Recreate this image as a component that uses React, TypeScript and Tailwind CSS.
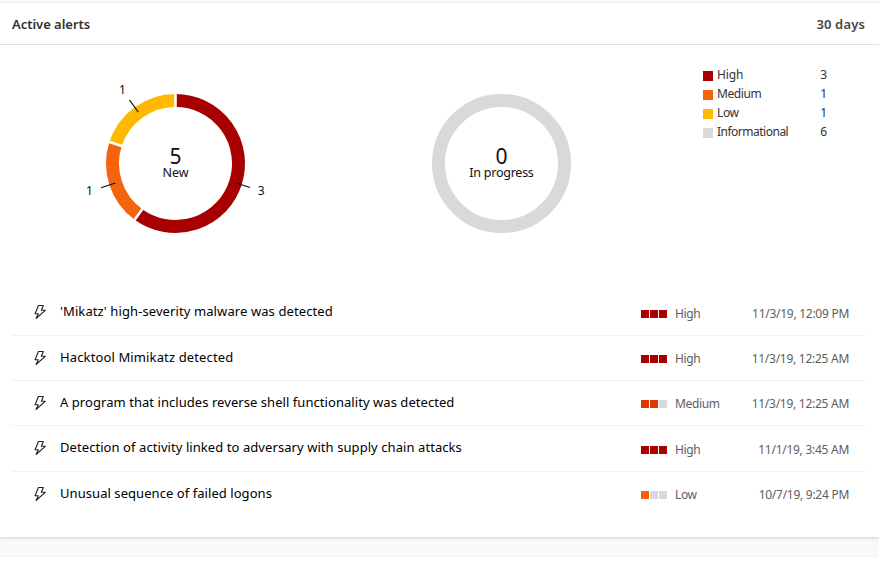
type Level = "High" | "Medium" | "Low";

const legend = [
  { name: "High", count: 3, color: "bg-[#a80000]", tracking: "tracking-[-0.1px]" },
  { name: "Medium", count: 1, color: "bg-[#f4630d]", tracking: "tracking-[-0.4px]" },
  { name: "Low", count: 1, color: "bg-[#ffb900]", tracking: "tracking-[-0.4px]" },
  { name: "Informational", count: 6, color: "bg-[#d9d9d9]", tracking: "tracking-[-0.5px]" },
];

const bars: Record<Level, string[]> = {
  High: ["bg-[#a80000]", "bg-[#a80000]", "bg-[#a80000]"],
  Medium: ["bg-[#d83b01]", "bg-[#d83b01]", "bg-[#d9d9d9]"],
  Low: ["bg-[#f4630d]", "bg-[#d9d9d9]", "bg-[#d9d9d9]"],
};

const alerts: { title: string; level: Level; time: string; row: string; meta: string; tracking: string }[] = [
  { title: "'Mikatz' high-severity malware was detected", level: "High", time: "11/3/19, 12:09 PM", row: "h-[46px] border-b", meta: "pt-[15px]", tracking: "tracking-[0.1px]" },
  { title: "Hacktool Mimikatz detected", level: "High", time: "11/3/19, 12:25 AM", row: "h-[45px] border-b", meta: "pt-[14px]", tracking: "tracking-[0.13px]" },
  { title: "A program that includes reverse shell functionality was detected", level: "Medium", time: "11/3/19, 12:25 AM", row: "h-[45px] border-b", meta: "pt-[14px]", tracking: "tracking-[0.055px]" },
  { title: "Detection of activity linked to adversary with supply chain attacks", level: "High", time: "11/1/19, 3:45 AM", row: "h-[46px] border-b", meta: "pt-[15px]", tracking: "tracking-[0.07px]" },
  { title: "Unusual sequence of failed logons", level: "Low", time: "10/7/19, 9:24 PM", row: "h-[46px]", meta: "pt-[14px]", tracking: "tracking-[0.06px]" },
];

const C = 70;
function point(r: number, deg: number) {
  const a = (deg * Math.PI) / 180;
  return `${(C + r * Math.sin(a)).toFixed(2)} ${(C - r * Math.cos(a)).toFixed(2)}`;
}

function Arc({ from, to, color }: { from: number; to: number; color: string }) {
  const large = to - from > 180 ? 1 : 0;
  return <path d={`M${point(63, from)} A63 63 0 ${large} 1 ${point(63, to)}`} fill="none" stroke={color} strokeWidth="13" />;
}

function NewDonut() {
  return (
    <svg className="block h-[170px] w-[200px]" viewBox="-25.5 -18.5 200 170">
      <Arc from={0} to={216} color="#a80000" />
      <Arc from={216} to={288} color="#f4630d" />
      <Arc from={288} to={360} color="#ffb900" />
      {[0, 216, 288].map((a) => (
        <path key={a} d={`M${point(55, a)} L${point(71, a)}`} stroke="#fff" strokeWidth="2.6" />
      ))}
      <g stroke="#111" strokeWidth="1.2">
        <path d="M130.5 89.5L144.5 94" />
        <path d="M9.8 89.5L-4.5 94.2" />
        <path d="M32.8 18.6L24 6.5" />
      </g>
      <g fill="#111" fontSize="12" textAnchor="middle">
        <text x="155.6" y="101.5">3</text>
        <text x="-16" y="101.5">1</text>
        <text x="17" y="0.5">1</text>
        <text x="70" y="70.3" fontSize="21">5</text>
        <text x="70" y="83.3" fontSize="12.5">New</text>
      </g>
    </svg>
  );
}

function ProgressDonut() {
  return (
    <svg className="block h-[170px] w-[200px]" viewBox="-25.5 -18.5 200 170">
      <circle cx={C} cy={C} r="63" fill="none" stroke="#d9d9d9" strokeWidth="13" />
      <g fill="#111" textAnchor="middle">
        <text x="70" y="70.3" fontSize="21">0</text>
        <text x="70" y="83.3" fontSize="12.5" letterSpacing="-0.25">In progress</text>
      </g>
    </svg>
  );
}

function Bolt() {
  return (
    <svg className="mt-[14px] block h-4 w-[14px]" viewBox="0 0 14 16" fill="none" stroke="#222" strokeWidth="1.1" strokeLinejoin="round">
      <path d="M5.4 1.5H10.3L8.4 6.3H12.3L3 14.5L5.3 9.8H2.1Z" />
    </svg>
  );
}

export default function App() {
  return (
    <div className="flex h-[564px] w-[879px] flex-col overflow-hidden bg-[#faf9f8] pt-[3px] font-['Noto_Sans','Open_Sans',sans-serif]">
      <section className="h-[534px] shrink-0 bg-white shadow-[0_1px_3px_rgba(0,0,0,0.17)]">
        <header className="flex h-[42px] items-center justify-between border-b border-[#e1dfdd] pt-[3px] pr-[14px] pl-3 text-[13px] font-semibold text-[#323130]">
          <h2 className="tracking-[-0.03px]">Active alerts</h2>
          <span className="tracking-[0.15px] text-[#484644]">30 days</span>
        </header>

        <div className="flex h-[245px] pl-20 pt-[30px]">
          <NewDonut />
          <div className="ml-[126px]">
            <ProgressDonut />
          </div>
          <ul className="-mt-[10px] ml-[96px] w-[125px] text-[12px] leading-[19px] text-[#333]">
            {legend.map((l) => (
              <li key={l.name} className="flex h-[19px] items-center">
                <span className={`mt-[3px] mr-[4px] ml-px h-[10px] w-[10px] ${l.color}`} />
                <span className={`flex-1 ${l.tracking}`}>{l.name}</span>
                <span>{l.count}</span>
              </li>
            ))}
          </ul>
        </div>

        <ul className="mx-3 mr-[14px]">
          {alerts.map((a) => (
            <li key={a.title} className={`flex border-[#f3f2f1] pl-[21px] ${a.row}`}>
              <Bolt />
              <span className={`ml-[13px] w-[581px] pt-[11px] text-[13px] leading-5 whitespace-nowrap text-black ${a.tracking}`}>{a.title}</span>
              <span className={`flex w-[208px] text-[12px] leading-[18px] text-[#605e5c] ${a.meta}`}>
                <span className="mt-[5px] mr-2 flex gap-px">
                  {bars[a.level].map((b, i) => (
                    <span key={i} className={`h-2 w-2 ${b}`} />
                  ))}
                </span>
                <span className="tracking-[-0.35px]">{a.level}</span>
                <span className="ml-auto tracking-[-0.27px] whitespace-nowrap">{a.time}</span>
              </span>
            </li>
          ))}
        </ul>
      </section>
      <section className="mt-5 h-2 bg-white shadow-[0_0_2px_rgba(0,0,0,0.08)]" />
    </div>
  );
}
